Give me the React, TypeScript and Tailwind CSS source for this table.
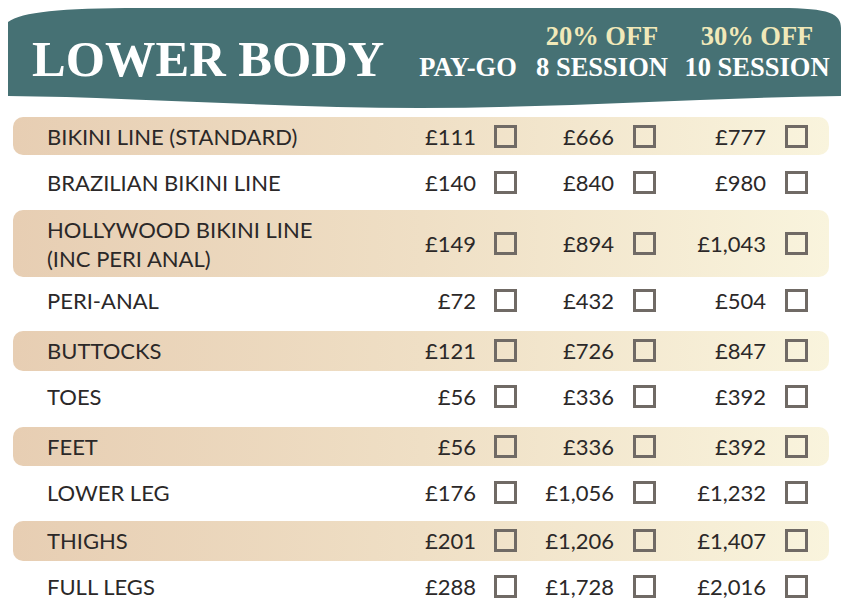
import React from "react";

type Row = { label: string[]; p: [string, string, string]; striped: boolean; h: number; pb?: number };

const rows: Row[] = [
  { label: ["BIKINI LINE (STANDARD)"], p: ["£111", "£666", "£777"], striped: true, h: 38 },
  { label: ["BRAZILIAN BIKINI LINE"], p: ["£140", "£840", "£980"], striped: false, h: 55, pb: 0 },
  { label: ["HOLLYWOOD BIKINI LINE", "(INC PERI ANAL)"], p: ["£149", "£894", "£1,043"], striped: true, h: 67 },
  { label: ["PERI-ANAL"], p: ["£72", "£432", "£504"], striped: false, h: 54, pb: 7 },
  { label: ["BUTTOCKS"], p: ["£121", "£726", "£847"], striped: true, h: 40, pb: 1 },
  { label: ["TOES"], p: ["£56", "£336", "£392"], striped: false, h: 56, pb: 5 },
  { label: ["FEET"], p: ["£56", "£336", "£392"], striped: true, h: 39 },
  { label: ["LOWER LEG"], p: ["£176", "£1,056", "£1,232"], striped: false, h: 55, pb: 2 },
  { label: ["THIGHS"], p: ["£201", "£1,206", "£1,407"], striped: true, h: 40, pb: 1 },
  { label: ["FULL LEGS"], p: ["£288", "£1,728", "£2,016"], striped: false, h: 52, pb: 2 },
];

function Box() {
  return <div className="w-[23px] h-[23px] border-[3px] border-[#706a65] shrink-0" />;
}

function Cell({ price, w, gap }: { price: string; w: string; gap: string }) {
  return (
    <div className={`flex items-center justify-end ${w} shrink-0`}>
      <span>{price}</span>
      <div className={gap} />
      <Box />
    </div>
  );
}

export default function App() {
  return (
    <div className="w-[851px] h-[600px] bg-white relative overflow-hidden">
      <div className="relative h-[117px]">
        <svg className="absolute left-0 top-0" width="851" height="117" viewBox="0 0 851 117">
          <path
            d="M8,22 C22,12 60,8 140,8 L780,8 C830,8 841,14 841,28 L841,96 C700,98 560,108 420,108 C280,108 130,97 8,96 Z"
            fill="#467174"
          />
        </svg>
        <div
          className="relative flex items-start text-white font-bold"
          style={{ fontFamily: '"Liberation Serif", "Times New Roman", serif' }}
        >
          <div className="pl-[32px] w-[418px] shrink-0 pt-[34px] text-[50.5px] leading-[50px] whitespace-nowrap">
            LOWER BODY
          </div>
          <div className="w-[100px] shrink-0 pt-[21px] text-[26.5px] leading-[31px] text-center whitespace-nowrap">
            <div>&nbsp;</div>
            <div>PAY-GO</div>
          </div>
          <div className="ml-[16px] w-[136px] shrink-0 pt-[21px] text-[26.5px] leading-[31px] text-center whitespace-nowrap">
            <div className="text-[#f1e9b9]">20% OFF</div>
            <div>8 SESSION</div>
          </div>
          <div className="ml-[14px] w-[146px] shrink-0 pt-[21px] text-[26.5px] leading-[31px] text-center whitespace-nowrap">
            <div className="text-[#f1e9b9]">30% OFF</div>
            <div>10 SESSION</div>
          </div>
        </div>
      </div>
      <div
        className="flex flex-col text-[22px] text-[#2b2828]"
        style={{ fontFamily: 'Lato, "Open Sans", sans-serif' }}
      >
        {rows.map((r, i) => (
          <div
            key={i}
            className={`ml-[13px] w-[816px] flex items-center pl-[34px] pr-[21px] rounded-[10px] ${
              r.striped ? "bg-gradient-to-r from-[#e7ceb3] via-[#efdfc5] to-[#f9f4dd]" : ""
            }`}
            style={{ height: r.h, paddingBottom: r.pb ?? 0 }}
          >
            <div className="w-[353px] shrink-0 leading-[29px] whitespace-nowrap">
              {r.label.map((l, j) => (
                <div key={j}>{l}</div>
              ))}
            </div>
            <Cell price={r.p[0]} w="w-[117px]" gap="w-[18px]" />
            <Cell price={r.p[1]} w="w-[139px]" gap="w-[19px]" />
            <Cell price={r.p[2]} w="w-[152px]" gap="w-[19px]" />
          </div>
        ))}
      </div>
    </div>
  );
}
